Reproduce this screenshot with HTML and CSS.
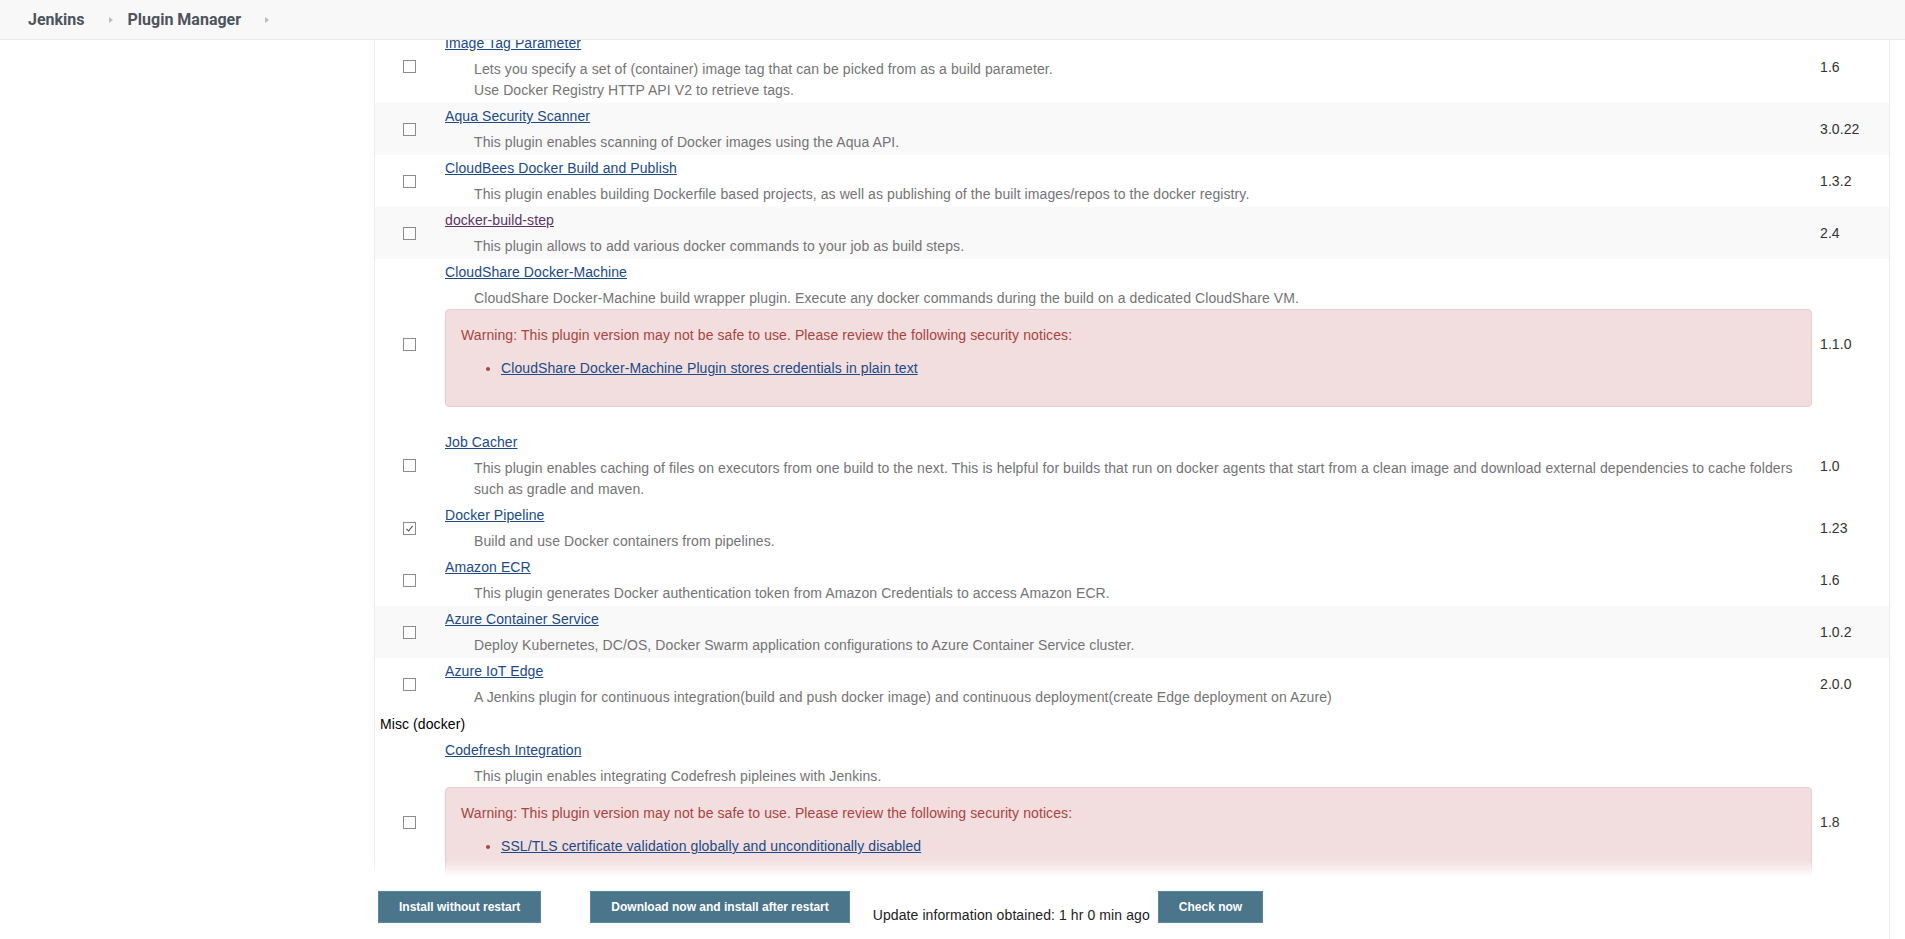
FILE: index.html
```html
<!DOCTYPE html>
<html lang="en">
<head>
<meta charset="utf-8">
<title>Plugin Manager [Jenkins]</title>
<link rel="stylesheet" href="styles.css">
</head>
<body>
<header class="topbar">
  <nav class="crumbs">
    <a class="crumb" href="#">Jenkins</a><span class="sep"></span>
    <a class="crumb" href="#">Plugin Manager</a><span class="sep"></span>
  </nav>
</header>

<div class="page">
  <aside class="side"></aside>
  <main class="main">
    <table class="plugins">
      <colgroup><col class="c-check"><col><col class="c-ver"></colgroup>
      <tbody>
        <tr>
          <td class="check"><span class="cb"></span></td>
          <td class="pane"><div class="name"><a href="#">Image Tag Parameter</a></div>
            <div class="excerpt">Lets you specify a set of (container) image tag that can be picked from as a build parameter.<br>Use Docker Registry HTTP API V2 to retrieve tags.</div></td>
          <td class="ver">1.6</td>
        </tr>
        <tr class="alt">
          <td class="check"><span class="cb"></span></td>
          <td class="pane"><div class="name"><a href="#">Aqua Security Scanner</a></div>
            <div class="excerpt">This plugin enables scanning of Docker images using the Aqua API.</div></td>
          <td class="ver">3.0.22</td>
        </tr>
        <tr>
          <td class="check"><span class="cb"></span></td>
          <td class="pane"><div class="name"><a href="#">CloudBees Docker Build and Publish</a></div>
            <div class="excerpt">This plugin enables building Dockerfile based projects, as well as publishing of the built images/repos to the docker registry.</div></td>
          <td class="ver">1.3.2</td>
        </tr>
        <tr class="alt">
          <td class="check"><span class="cb"></span></td>
          <td class="pane"><div class="name"><a class="visited" href="#">docker-build-step</a></div>
            <div class="excerpt">This plugin allows to add various docker commands to your job as build steps.</div></td>
          <td class="ver">2.4</td>
        </tr>
        <tr>
          <td class="check"><span class="cb"></span></td>
          <td class="pane"><div class="name"><a href="#">CloudShare Docker-Machine</a></div>
            <div class="excerpt">CloudShare Docker-Machine build wrapper plugin. Execute any docker commands during the build on a dedicated CloudShare VM.</div>
            <div class="alert">Warning: This plugin version may not be safe to use. Please review the following security notices:
              <ul><li><a href="#">CloudShare Docker-Machine Plugin stores credentials in plain text</a></li></ul>
            </div></td>
          <td class="ver">1.1.0</td>
        </tr>
        <tr>
          <td class="check"><span class="cb"></span></td>
          <td class="pane"><div class="name"><a href="#">Job Cacher</a></div>
            <div class="excerpt">This plugin enables caching of files on executors from one build to the next. This is helpful for builds that run on docker agents that start from a clean image and download external dependencies to cache folders such as gradle and maven.</div></td>
          <td class="ver">1.0</td>
        </tr>
        <tr>
          <td class="check"><span class="cb checked"><svg viewBox="0 0 11 11" width="11" height="11"><polyline points="2.5,5.8 4.6,8 8.6,2.8" fill="none" stroke="#555" stroke-width="1.1"/></svg></span></td>
          <td class="pane"><div class="name"><a href="#">Docker Pipeline</a></div>
            <div class="excerpt">Build and use Docker containers from pipelines.</div></td>
          <td class="ver">1.23</td>
        </tr>
        <tr>
          <td class="check"><span class="cb"></span></td>
          <td class="pane"><div class="name"><a href="#">Amazon ECR</a></div>
            <div class="excerpt">This plugin generates Docker authentication token from Amazon Credentials to access Amazon ECR.</div></td>
          <td class="ver">1.6</td>
        </tr>
        <tr class="alt">
          <td class="check"><span class="cb"></span></td>
          <td class="pane"><div class="name"><a href="#">Azure Container Service</a></div>
            <div class="excerpt">Deploy Kubernetes, DC/OS, Docker Swarm application configurations to Azure Container Service cluster.</div></td>
          <td class="ver">1.0.2</td>
        </tr>
        <tr>
          <td class="check"><span class="cb"></span></td>
          <td class="pane"><div class="name"><a href="#">Azure IoT Edge</a></div>
            <div class="excerpt">A Jenkins plugin for continuous integration(build and push docker image) and continuous deployment(create Edge deployment on Azure)</div></td>
          <td class="ver">2.0.0</td>
        </tr>
        <tr class="category">
          <td colspan="3">Misc (docker)</td>
        </tr>
        <tr>
          <td class="check"><span class="cb"></span></td>
          <td class="pane"><div class="name"><a href="#">Codefresh Integration</a></div>
            <div class="excerpt">This plugin enables integrating Codefresh pipleines with Jenkins.</div>
            <div class="alert">Warning: This plugin version may not be safe to use. Please review the following security notices:
              <ul><li><a href="#">SSL/TLS certificate validation globally and unconditionally disabled</a></li></ul>
            </div></td>
          <td class="ver">1.8</td>
        </tr>
      </tbody>
    </table>
  </main>
</div>

<div class="bottom-bar">
  <button class="btn" type="button">Install without restart</button>
  <button class="btn btn-download" type="button">Download now and install after restart</button>
  <span class="update-info">Update information obtained: 1 hr 0 min ago</span>
  <button class="btn btn-check" type="button">Check now</button>
</div>
</body>
</html>
```

FILE: styles.css
```css
html, body {
  margin: 0;
  padding: 0;
  overflow: hidden;
  background: #fff;
}

body {
  font-family: "Liberation Sans", Arial, sans-serif;
  font-size: 14px;
  letter-spacing: 0.09px;
  color: #333;
}

a {
  color: #204a87;
  text-decoration: underline;
}

a.visited {
  color: #5c3566;
}

/* ---------- top bar (overlays scrolled content) ---------- */
.topbar {
  position: fixed;
  top: 0;
  left: 0;
  right: 0;
  height: 39px;
  background: #f8f8f8;
  border-bottom: 1px solid #e8e8e8;
  display: flex;
  align-items: center;
  padding-left: 28px;
  z-index: 10;
}

.crumbs {
  display: flex;
  align-items: center;
}

.crumb {
  font-family: Roboto, "Liberation Sans", sans-serif;
  font-weight: 700;
  font-size: 16px;
  letter-spacing: normal;
  color: #4d545d;
  text-decoration: none;
}

.sep {
  width: 0;
  height: 0;
  border-left: 4px solid #bdbdbd;
  border-top: 3px solid transparent;
  border-bottom: 3px solid transparent;
  margin: 1px 15px 0 24px;
}

/* ---------- page layout ---------- */
.page {
  display: flex;
  min-height: 100vh;
}

.side {
  flex: none;
  width: 374px;
}

.main {
  flex: 1;
  margin-right: 15px;
  border-left: 1px solid #ececec;
  border-right: 1px solid #ececec;
  padding-top: 30px;
}

/* ---------- plugin table ---------- */
.plugins {
  width: 100%;
  table-layout: fixed;
  border-collapse: collapse;
  border-spacing: 0;
}

.c-check { width: 68px; }
.c-ver { width: 77px; }

.plugins td {
  padding: 0;
}

.plugins tr.alt {
  background: #f9f9f9;
}

.plugins td.check {
  vertical-align: middle;
}

.cb {
  display: block;
  box-sizing: border-box;
  width: 13px;
  height: 13px;
  margin: 0 auto;
  border: 1px solid #8c8c8c;
  background: #fff;
}

.cb svg {
  display: block;
}

.plugins td.pane {
  padding: 3px 0 2px 2px;
  vertical-align: top;
}

.name {
  line-height: 21px;
}

.excerpt {
  margin-top: 5px;
  padding-left: 29px;
  line-height: 21px;
  color: #747474;
}

.plugins td.ver {
  padding-left: 8px;
  vertical-align: middle;
  color: #333;
}

.alert {
  margin: 0 0 20px;
  padding: 15px;
  border: 1px solid #ebccd1;
  border-radius: 4px;
  background: #f2dede;
  color: #a94442;
  line-height: 21px;
}

.alert ul {
  margin: 12px 0;
  padding-left: 40px;
}

.plugins tr.category td {
  padding: 4px 0 2px 5px;
  line-height: 21px;
  color: #000;
}

/* ---------- sticky bottom bar (overlays content) ---------- */
.bottom-bar {
  position: fixed;
  left: 374px;
  right: 16px;
  bottom: 0;
  height: 48px;
  padding: 14px 0 0 4px;
  background: #fff;
  display: flex;
  align-items: flex-start;
  z-index: 5;
}

.bottom-bar::before {
  content: "";
  position: absolute;
  left: 0;
  right: 0;
  top: -17px;
  height: 17px;
  background: linear-gradient(to bottom, rgba(255, 255, 255, 0), #fff);
}

.btn {
  font-family: "Liberation Sans", Arial, sans-serif;
  font-weight: 700;
  font-size: 12px;
  line-height: 14px;
  letter-spacing: normal;
  color: #fff;
  background: #4b758b;
  border: 1px solid #5a879f;
  padding: 8px 20px;
  margin: 0;
  border-radius: 0;
  cursor: pointer;
}

.btn-download {
  margin-left: 49px;
}

.update-info {
  margin: 16px 0 0 23px;
  line-height: 16px;
  font-size: 14px;
  color: #222;
}

.btn-check {
  margin-left: 8px;
}
```
